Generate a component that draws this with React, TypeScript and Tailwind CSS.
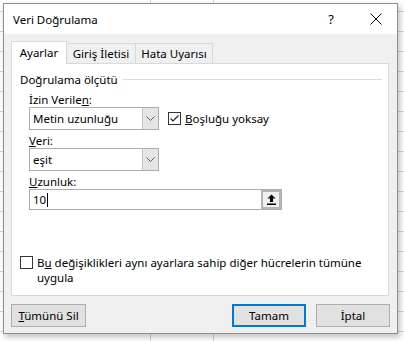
import React from "react";

const font = { fontFamily: '"Noto Sans", "Segoe UI", sans-serif' };

function Chevron() {
  return (
    <svg width="9" height="5" viewBox="0 0 9 5" className="block">
      <path d="M0.5 0.5 L4.5 4.5 L8.5 0.5" fill="none" stroke="#606060" strokeWidth="1" />
    </svg>
  );
}

function Combo({ value }: { value: string }) {
  return (
    <div className="flex h-[23px] w-[130px] border border-[#adadad] bg-white">
      <div className="flex flex-1 items-center pl-[3px] text-[11.5px] leading-[15px] text-black">{value}</div>
      <div className="flex w-[16px] items-center justify-center border-l border-[#c4c4c4] bg-[#e5e5e5]">
        <Chevron />
      </div>
    </div>
  );
}

function CheckBox({ checked }: { checked?: boolean }) {
  return (
    <div className="flex h-[13px] w-[13px] shrink-0 items-center justify-center border border-[#333333] bg-white">
      {checked && (
        <svg width="11" height="11" viewBox="0 0 11 11" className="block">
          <path d="M1.5 5.5 L4 8 L9.5 2.5" fill="none" stroke="#222" strokeWidth="1.2" />
        </svg>
      )}
    </div>
  );
}

function RangeIcon() {
  return (
    <svg width="9" height="11" viewBox="0 0 9 11" className="block">
      <path d="M4.5 0.5 L8.5 4.5 L6 4.5 L6 8 L3 8 L3 4.5 L0.5 4.5 Z" fill="#000" />
      <rect x="0" y="9.5" width="9" height="1.5" fill="#000" />
    </svg>
  );
}

function Btn({ children, primary, w }: { children: React.ReactNode; primary?: boolean; w: string }) {
  return (
    <div
      className={
        "flex h-[23px] items-center justify-center bg-[#e1e1e1] text-[11.5px] leading-[15px] text-black " +
        w +
        (primary ? " border-2 border-[#0078d7]" : " border border-[#adadad]")
      }
    >
      {children}
    </div>
  );
}

export default function App() {
  return (
    <div
      className="h-[341px] w-[404px] overflow-hidden bg-white pl-[3px] pt-[3px] bg-[linear-gradient(to_right,transparent_150px,#d4d4d4_150px,#d4d4d4_151px,transparent_151px,transparent_213px,#d4d4d4_213px,#d4d4d4_214px,transparent_214px),repeating-linear-gradient(to_bottom,transparent_0px,transparent_11px,#d4d4d4_11px,#d4d4d4_12px,transparent_12px,transparent_20px)]"
      style={font}
    >
      <div className="flex h-[331px] w-[395px] flex-col border border-[#8f8f8f] bg-[#f0f0f0] shadow-[2px_3px_6px_rgba(0,0,0,0.25)]">
        {/* Title bar */}
        <div className="flex h-[30px] items-center bg-white pl-[9px] pr-[15px]">
          <span className="text-[11.5px] leading-[15px] text-black">Veri Doğrulama</span>
          <span className="ml-auto mr-[36px] text-[13px] leading-[15px] text-black">?</span>
          <svg width="12" height="12" viewBox="0 0 12 12" className="block">
            <path d="M0.5 0.5 L11.5 11.5 M11.5 0.5 L0.5 11.5" stroke="#000" strokeWidth="1" />
          </svg>
        </div>

        {/* Body */}
        <div className="flex flex-1 flex-col pl-[7px] pt-[7px]">
          {/* Tabs */}
          <div className="relative z-10 flex h-[22px] items-end">
            <div className="-mb-px flex h-[23px] w-[56px] items-center justify-center border border-b-0 border-[#d9d9d9] bg-white pb-[1px] text-[11.5px] leading-[15px] text-black">
              Ayarlar
            </div>
            <div className="flex h-[20px] w-[69px] items-center justify-center border border-b-0 border-l-0 border-[#d9d9d9] bg-[#f0f0f0] text-[11.5px] leading-[15px] text-black">
              Giriş İletisi
            </div>
            <div className="flex h-[20px] w-[77px] items-center justify-center border border-b-0 border-l-0 border-[#d9d9d9] bg-[#f0f0f0] text-[11.5px] leading-[15px] text-black">
              Hata Uyarısı
            </div>
          </div>

          {/* Panel */}
          <div className="flex h-[233px] w-[378px] flex-col border border-[#d9d9d9] bg-white pl-[8px] text-[11.5px] leading-[15px] text-black">
            <div className="mt-[8px] flex items-center pr-[6px]">
              <span>Doğrulama ölçütü</span>
              <div className="ml-[5px] h-px flex-1 bg-[#dcdcdc]" />
            </div>

            <div className="flex flex-col pl-[9px]">
              <div className="mt-[5px]">
                İzin Verile<span className="underline">n</span>:
              </div>
              <div className="flex items-center">
                <Combo value="Metin uzunluğu" />
                <div className="ml-[9px] flex items-center">
                  <CheckBox checked />
                  <span className="ml-[4px]">
                    <span className="underline">B</span>oşluğu yoksay
                  </span>
                </div>
              </div>

              <div className="mt-[3px]">
                <span className="underline">V</span>eri:
              </div>
              <div>
                <Combo value="eşit" />
              </div>

              <div className="mt-[3px]">
                <span className="underline">U</span>zunluk:
              </div>
              <div className="flex h-[21px] w-[253px] border border-[#adadad] bg-white">
                <div className="flex flex-1 items-center pl-[3px]">
                  10<span className="ml-[1px] inline-block h-[14px] w-px bg-black" />
                </div>
                <div className="flex w-[20px] items-center justify-center border-2 border-[#b4b4b4] bg-[#f0f0f0]">
                  <RangeIcon />
                </div>
              </div>
            </div>

            <div className="mt-[45px] flex items-start">
              <div className="mt-[1px]">
                <CheckBox />
              </div>
              <div className="ml-[4px] flex flex-col">
                <span>
                  B<span className="underline">u</span> değişiklikleri aynı ayarlara sahip diğer hücrelerin tümüne
                </span>
                <span>uygula</span>
              </div>
            </div>
          </div>

          {/* Buttons */}
          <div className="mt-[8px] flex w-[379px]">
            <Btn w="w-[75px]">
              <span>
                <span className="underline">T</span>ümünü Sil
              </span>
            </Btn>
            <div className="ml-auto flex gap-[10px]">
              <Btn w="w-[74px]" primary>
                Tamam
              </Btn>
              <Btn w="w-[74px]">İptal</Btn>
            </div>
          </div>
        </div>
      </div>
    </div>
  );
}
